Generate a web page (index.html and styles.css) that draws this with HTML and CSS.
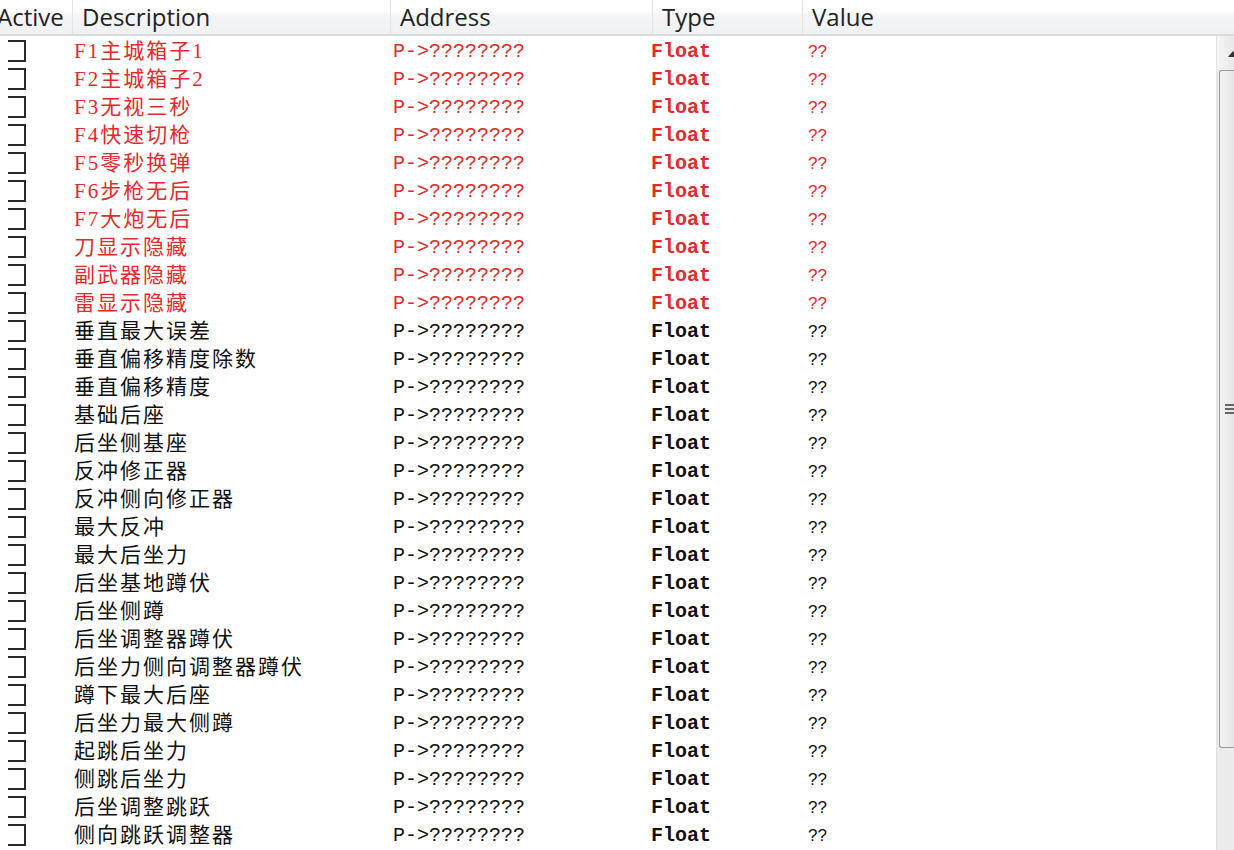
FILE: index.html
```html
<!DOCTYPE html>
<html>
<head>
<meta charset="utf-8">
<link rel="stylesheet" href="styles.css">
</head>
<body>
<div class="window">
  <div class="header">
    <div class="hcell hactive"><span>Active</span></div>
    <div class="hcell">Description</div>
    <div class="hcell">Address</div>
    <div class="hcell">Type</div>
    <div class="hcell">Value</div>
  </div>
  <div class="body">
    <div class="rows">
      <div class="row red"><div class="chk"><i></i></div><div class="desc">F1主城箱子1</div><div class="addr">P-&gt;????????</div><div class="type">Float</div><div class="val">??</div></div>
      <div class="row red"><div class="chk"><i></i></div><div class="desc">F2主城箱子2</div><div class="addr">P-&gt;????????</div><div class="type">Float</div><div class="val">??</div></div>
      <div class="row red"><div class="chk"><i></i></div><div class="desc">F3无视三秒</div><div class="addr">P-&gt;????????</div><div class="type">Float</div><div class="val">??</div></div>
      <div class="row red"><div class="chk"><i></i></div><div class="desc">F4快速切枪</div><div class="addr">P-&gt;????????</div><div class="type">Float</div><div class="val">??</div></div>
      <div class="row red"><div class="chk"><i></i></div><div class="desc">F5零秒换弹</div><div class="addr">P-&gt;????????</div><div class="type">Float</div><div class="val">??</div></div>
      <div class="row red"><div class="chk"><i></i></div><div class="desc">F6步枪无后</div><div class="addr">P-&gt;????????</div><div class="type">Float</div><div class="val">??</div></div>
      <div class="row red"><div class="chk"><i></i></div><div class="desc">F7大炮无后</div><div class="addr">P-&gt;????????</div><div class="type">Float</div><div class="val">??</div></div>
      <div class="row red"><div class="chk"><i></i></div><div class="desc">刀显示隐藏</div><div class="addr">P-&gt;????????</div><div class="type">Float</div><div class="val">??</div></div>
      <div class="row red"><div class="chk"><i></i></div><div class="desc">副武器隐藏</div><div class="addr">P-&gt;????????</div><div class="type">Float</div><div class="val">??</div></div>
      <div class="row red"><div class="chk"><i></i></div><div class="desc">雷显示隐藏</div><div class="addr">P-&gt;????????</div><div class="type">Float</div><div class="val">??</div></div>
      <div class="row"><div class="chk"><i></i></div><div class="desc">垂直最大误差</div><div class="addr">P-&gt;????????</div><div class="type">Float</div><div class="val">??</div></div>
      <div class="row"><div class="chk"><i></i></div><div class="desc">垂直偏移精度除数</div><div class="addr">P-&gt;????????</div><div class="type">Float</div><div class="val">??</div></div>
      <div class="row"><div class="chk"><i></i></div><div class="desc">垂直偏移精度</div><div class="addr">P-&gt;????????</div><div class="type">Float</div><div class="val">??</div></div>
      <div class="row"><div class="chk"><i></i></div><div class="desc">基础后座</div><div class="addr">P-&gt;????????</div><div class="type">Float</div><div class="val">??</div></div>
      <div class="row"><div class="chk"><i></i></div><div class="desc">后坐侧基座</div><div class="addr">P-&gt;????????</div><div class="type">Float</div><div class="val">??</div></div>
      <div class="row"><div class="chk"><i></i></div><div class="desc">反冲修正器</div><div class="addr">P-&gt;????????</div><div class="type">Float</div><div class="val">??</div></div>
      <div class="row"><div class="chk"><i></i></div><div class="desc">反冲侧向修正器</div><div class="addr">P-&gt;????????</div><div class="type">Float</div><div class="val">??</div></div>
      <div class="row"><div class="chk"><i></i></div><div class="desc">最大反冲</div><div class="addr">P-&gt;????????</div><div class="type">Float</div><div class="val">??</div></div>
      <div class="row"><div class="chk"><i></i></div><div class="desc">最大后坐力</div><div class="addr">P-&gt;????????</div><div class="type">Float</div><div class="val">??</div></div>
      <div class="row"><div class="chk"><i></i></div><div class="desc">后坐基地蹲伏</div><div class="addr">P-&gt;????????</div><div class="type">Float</div><div class="val">??</div></div>
      <div class="row"><div class="chk"><i></i></div><div class="desc">后坐侧蹲</div><div class="addr">P-&gt;????????</div><div class="type">Float</div><div class="val">??</div></div>
      <div class="row"><div class="chk"><i></i></div><div class="desc">后坐调整器蹲伏</div><div class="addr">P-&gt;????????</div><div class="type">Float</div><div class="val">??</div></div>
      <div class="row"><div class="chk"><i></i></div><div class="desc">后坐力侧向调整器蹲伏</div><div class="addr">P-&gt;????????</div><div class="type">Float</div><div class="val">??</div></div>
      <div class="row"><div class="chk"><i></i></div><div class="desc">蹲下最大后座</div><div class="addr">P-&gt;????????</div><div class="type">Float</div><div class="val">??</div></div>
      <div class="row"><div class="chk"><i></i></div><div class="desc">后坐力最大侧蹲</div><div class="addr">P-&gt;????????</div><div class="type">Float</div><div class="val">??</div></div>
      <div class="row"><div class="chk"><i></i></div><div class="desc">起跳后坐力</div><div class="addr">P-&gt;????????</div><div class="type">Float</div><div class="val">??</div></div>
      <div class="row"><div class="chk"><i></i></div><div class="desc">侧跳后坐力</div><div class="addr">P-&gt;????????</div><div class="type">Float</div><div class="val">??</div></div>
      <div class="row"><div class="chk"><i></i></div><div class="desc">后坐调整跳跃</div><div class="addr">P-&gt;????????</div><div class="type">Float</div><div class="val">??</div></div>
      <div class="row"><div class="chk"><i></i></div><div class="desc">侧向跳跃调整器</div><div class="addr">P-&gt;????????</div><div class="type">Float</div><div class="val">??</div></div>
    </div>
    <div class="scrollbar">
      <div class="sb-up"><svg width="17" height="34" viewBox="0 0 17 34"><path d="M11 21 L16 15 L21 21 Z" fill="#333"/></svg></div>
      <div class="sb-thumb"><div class="grip"><i></i><i></i><i></i></div></div>
      <div class="sb-track"></div>
    </div>
  </div>
</div>
</body>
</html>
```

FILE: styles.css
```css
html, body {
  margin: 0;
  padding: 0;
  background: #ffffff;
  overflow: hidden;
}
.window {
  width: 1234px;
  height: 850px;
  display: flex;
  flex-direction: column;
  background: #fff;
}
.header {
  display: grid;
  grid-template-columns: 73px 318px 262px 150px 1fr;
  height: 34px;
  border-bottom: 2px solid #d9dadc;
  background: linear-gradient(#ffffff 0%, #ffffff 30%, #f4f5f6 45%, #f0f1f2 100%);
  font-family: "Open Sans", "Liberation Sans", sans-serif;
  font-size: 24px;
  color: #222;
}
.hcell {
  line-height: 34px;
  padding-left: 9px;
  border-right: 1px solid #e4e4e4;
  white-space: nowrap;
  overflow: hidden;
}
.hcell:last-child { border-right: none; }
.hactive { padding-left: 0; }
.hactive span { margin-left: -3px; }
.body {
  flex: 1;
  display: flex;
  min-height: 0;
}
.rows {
  flex: 1;
  padding-top: 2px;
  overflow: hidden;
}
.row {
  display: grid;
  grid-template-columns: 74px 319px 258px 157px 1fr;
  height: 28px;
  line-height: 28px;
  color: #111;
  white-space: nowrap;
}
.row.red { color: #e42a2a; }
.chk {
  position: relative;
}
.chk i {
  position: absolute;
  left: 8px;
  top: 2px;
  width: 16px;
  height: 18px;
  border: 2.5px solid #2a2a2a;
  border-left: none;
}
.desc {
  font-family: "Liberation Serif", "Noto Sans CJK SC", serif;
  font-size: 21px;
  letter-spacing: 2px;
  line-height: 26px;
}
.addr {
  font-family: "Liberation Mono", monospace;
  font-size: 20px;
}
.type {
  font-family: "Liberation Mono", monospace;
  font-size: 20px;
  font-weight: bold;
}
.val {
  font-family: "Liberation Sans", sans-serif;
  font-size: 17px;
}
.scrollbar {
  width: 17px;
  display: flex;
  flex-direction: column;
  background: #ececec;
  border-left: 1px solid #e2e2e2;
}
.sb-up {
  height: 34px;
  background: linear-gradient(90deg, #f4f4f4, #e9e9e9);
}
.sb-up svg { display: block; }
.sb-thumb {
  height: 676px;
  margin-left: 2px;
  border: 1px solid #9b9b9b;
  border-right: none;
  border-radius: 3px 0 0 3px;
  background: linear-gradient(90deg, #f3f3f3, #e6e6e6);
  display: flex;
  align-items: center;
  justify-content: flex-end;
}
.grip {
  display: flex;
  flex-direction: column;
  gap: 2px;
  width: 9px;
}
.grip i {
  display: block;
  height: 2px;
  background: #666;
}
.sb-track {
  flex: 1;
  background: #ececec;
}
```
